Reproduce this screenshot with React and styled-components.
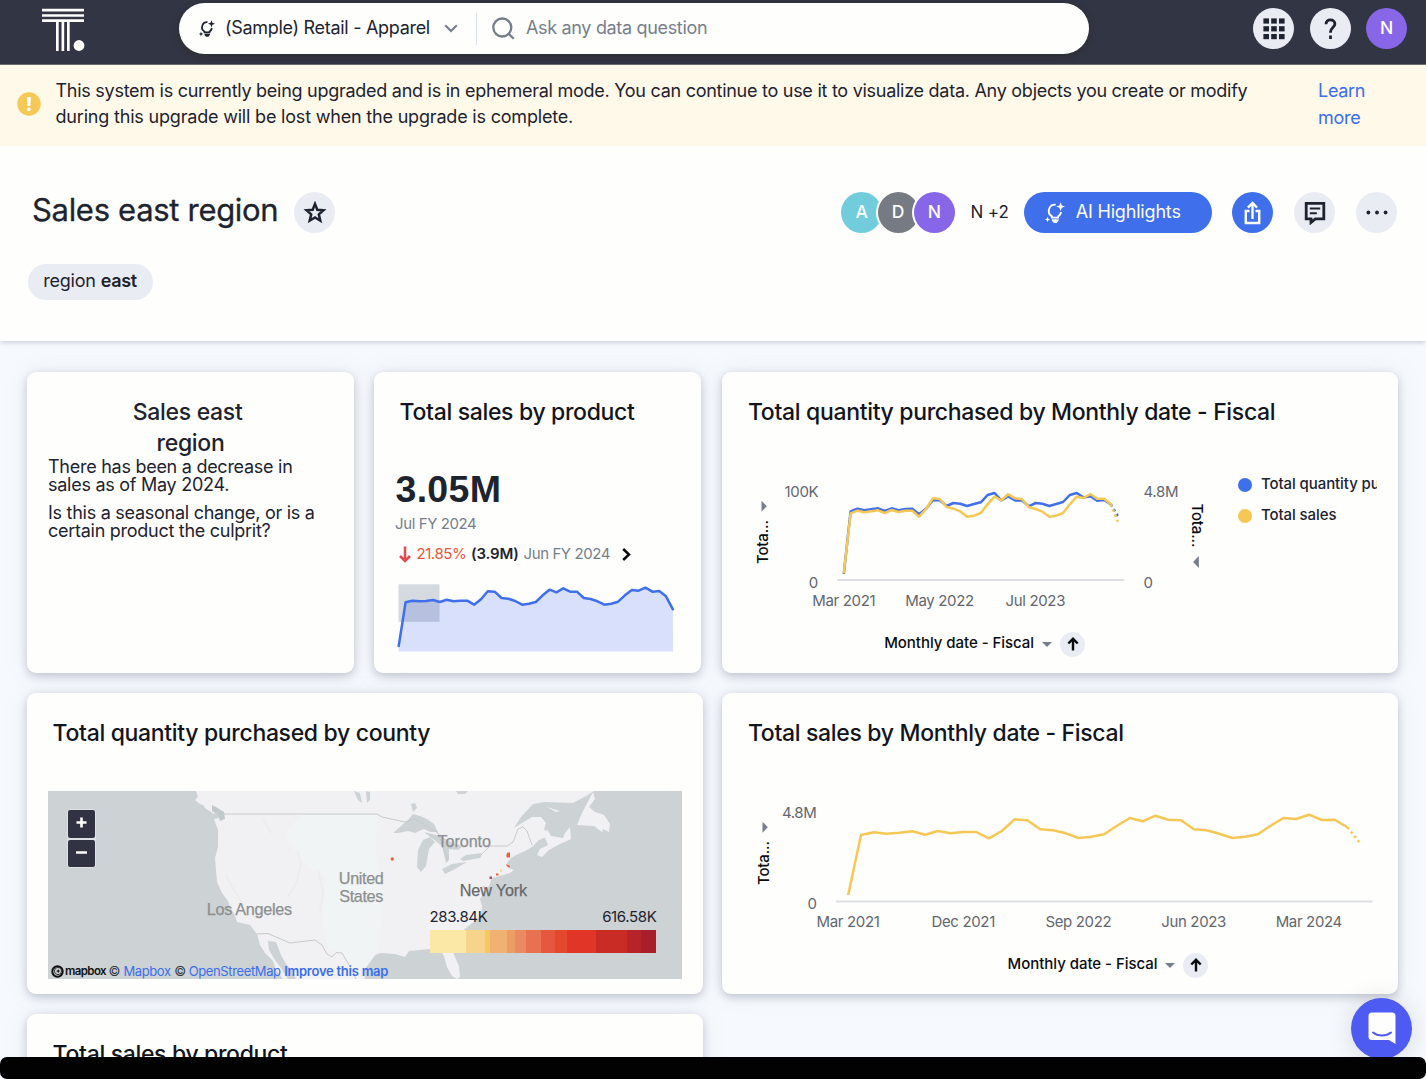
import React from 'react';
import styled, { createGlobalStyle } from 'styled-components';

const GlobalStyle = createGlobalStyle`
  * { box-sizing: border-box; }
  body { margin: 0; background: #f6f9fd; font-family: Inter, "Liberation Sans", sans-serif; color: #1d232f; }
  svg { display: block; flex: none; }
  h1, h2, p { margin: 0; }
  button { font: inherit; border: 0; padding: 0; }
`;

const Page = styled.div`
  height: 1079px;
  display: flex;
  flex-direction: column;
  overflow: hidden;
`;

/* ---------- top bar ---------- */
const TopBar = styled.header`
  height: 65px;
  flex: none;
  display: flex;
  align-items: flex-start;
  padding: 0 19px 0 42px;
  background: #323543;
  border-bottom: 1px solid #6b6c72;
`;
const LogoBox = styled.div`
  width: 137px;
  padding-top: 8px;
`;
const SearchPill = styled.div`
  width: 910px;
  height: 51px;
  margin-top: 3px;
  border-radius: 26px;
  background: #fefefd;
  box-shadow: 0 2px 6px rgba(44, 44, 44, 0.8);
  display: flex;
  align-items: center;
  padding-left: 20px;
  font-size: 18px;
`;
const SourceName = styled.span`
  margin: 0 14px 2px 10px;
  width: 205px;
  white-space: nowrap;
  letter-spacing: -0.3px;
`;
const Divider = styled.span`
  width: 1px;
  height: 32px;
  margin: 0 15px 0 18px;
  background: #dbdfe7;
`;
const Placeholder = styled.span`
  margin: 0 0 2px 11px;
  color: #777e8b;
  letter-spacing: -0.33px;
`;
const TopActions = styled.div`
  display: flex;
  gap: 15.5px;
  margin: 8px 0 0 auto;
`;
const CircleButton = styled.button`
  width: 41px;
  height: 41px;
  flex: none;
  border-radius: 50%;
  display: flex;
  align-items: center;
  justify-content: center;
  background: ${(p) => p.$bg || '#eaecf4'};
  color: ${(p) => p.$color || '#1d232f'};
`;
const Letter = styled.span`
  font-size: 17.5px;
  font-weight: 450;
  line-height: 22px;
  padding-bottom: 2px;
`;

/* ---------- banner ---------- */
const Banner = styled.div`
  height: 81px;
  flex: none;
  display: flex;
  padding: 13px 52px 0 17px;
  background: #fff9e9;
  font-size: 18px;
  line-height: 26px;
`;
const BannerIcon = styled.div`
  padding: 14px 14.5px 0 0;
`;
const BannerText = styled.p`
  width: 1262.5px;
  white-space: nowrap;
`;
const BannerLine = styled.span`
  display: block;
  letter-spacing: ${(p) => p.$spacing}px;
`;
const LearnMore = styled.a`
  width: 56px;
  margin-top: -1px;
  color: #3b6eea;
  line-height: 27px;
  letter-spacing: -0.3px;
`;

/* ---------- board header ---------- */
const BoardHeader = styled.section`
  height: 195px;
  flex: none;
  padding: 46px 29px 0 27.5px;
  background: #fefefd;
  box-shadow: 0 3px 4px -1px rgba(90, 95, 140, 0.25);
  z-index: 1;
`;
const TitleRow = styled.div`
  height: 41px;
  display: flex;
  align-items: center;
`;
const Title = styled.h1`
  margin: 0 15px 0 4.5px;
  padding-bottom: 5px;
  width: 247px;
  white-space: nowrap;
  font-size: 31px;
  line-height: 38px;
  font-weight: 400;
  letter-spacing: -0.31px;
  -webkit-text-stroke: 0.3px #1d232f;
`;
const Actions = styled.div`
  display: flex;
  align-items: center;
  gap: 21px;
  margin-left: auto;
`;
const People = styled.div`
  display: flex;
  align-items: center;
  margin-right: -6px;
`;
const Avatar = styled.span`
  width: 41px;
  height: 41px;
  margin-right: -4.7px;
  border-radius: 50%;
  box-shadow: 0 0 0 2px #fefefd;
  display: flex;
  align-items: center;
  justify-content: center;
  background: ${(p) => p.$bg};
  color: #fefefd;
`;
const MoreCount = styled.span`
  margin-left: 20.2px;
  padding-bottom: 1px;
  font-size: 17px;
  letter-spacing: -0.1px;
`;
const Highlights = styled.button`
  width: 188px;
  height: 41px;
  margin-right: -0.7px;
  border-radius: 21px;
  display: flex;
  align-items: center;
  gap: 11px;
  padding-left: 21px;
  background: #3f6fea;
  color: #fefefd;
  font-size: 18px;
  letter-spacing: -0.18px;
  line-height: 22px;
  & > span { padding-bottom: 2px; }
`;
const FilterChip = styled.div`
  width: 125px;
  height: 36px;
  margin-top: 31px;
  padding: 0 0 3px;
  border-radius: 18px;
  display: flex;
  align-items: center;
  justify-content: center;
  gap: 5px;
  background: #eaecf4;
  font-size: 18px;
  letter-spacing: -0.2px;
  & b { font-weight: 600; letter-spacing: -0.35px; }
`;

/* ---------- board grid ---------- */
const Board = styled.main`
  flex: 1;
  min-height: 0;
  display: flex;
  gap: 19.4px;
  padding: 31px 27px 0;
`;
const Column = styled.div`
  width: 676px;
  flex: none;
  display: flex;
  flex-direction: column;
  gap: 20.5px;
`;
const TileRow = styled.div`
  display: flex;
  gap: 20px;
`;
const Card = styled.article`
  width: ${(p) => p.$w || 676}px;
  height: 300.5px;
  flex: none;
  padding: ${(p) => p.$pt || 25}px 21px 0;
  border-radius: 9px;
  background: #fefefd;
  box-shadow: 0 3px 8px rgba(90, 98, 120, 0.32), 0 0 24px rgba(150, 150, 180, 0.12);
  overflow: hidden;
`;
const CardTitle = styled.h2`
  padding-left: 4.6px;
  height: 31px;
  font-size: 23px;
  line-height: 31px;
  font-weight: 500;
  white-space: nowrap;
  color: #12151d;
  letter-spacing: -0.33px;
`;
const NoteTitle = styled.h2`
  margin-bottom: -1px;
  text-align: center;
  white-space: pre;
  font-size: 23px;
  line-height: 31px;
  font-weight: 500;
  letter-spacing: -0.3px;
`;
const NoteText = styled.p`
  margin-bottom: 9.8px;
  white-space: pre;
  font-size: 18px;
  line-height: 18.2px;
  letter-spacing: -0.27px;
`;

/* ---------- KPI ---------- */
const Kpi = styled.div`
  padding-top: 39px;
  font-size: 15px;
  line-height: 20px;
`;
const KpiValue = styled.div`
  padding-left: 0.5px;
  font: bold 37.5px/44px "Liberation Sans", sans-serif;
  letter-spacing: 0.3px;
`;
const Muted = styled.span`
  color: #777e8b;
  letter-spacing: -0.4px;
`;
const KpiPeriod = styled.div`
  height: 20px;
  margin-top: 3px;
`;
const KpiChange = styled.div`
  height: 20px;
  margin: 10px 0 19px;
  padding-left: 4px;
  display: flex;
  align-items: center;
  white-space: nowrap;
`;
const Delta = styled.span`
  width: 60px;
  padding-left: 5.5px;
  color: #e6563c;
  letter-spacing: -0.45px;
`;
const Previous = styled.b`
  width: 52.5px;
  font-weight: 600;
  letter-spacing: -0.15px;
`;
const Next = styled.span`
  padding-left: 11.5px;
`;

/* ---------- charts ---------- */
const ChartBody = styled.div`
  display: flex;
  height: 148px;
  margin-top: 42px;
`;
const Legend = styled.ul`
  width: 140px;
  height: 66px;
  margin: 2px 0 0 20.5px;
  padding: 0;
  list-style: none;
  overflow: hidden;
`;
const LegendItem = styled.li`
  height: 31px;
  display: flex;
  align-items: flex-start;
  gap: 9px;
  padding-top: 2px;
  white-space: nowrap;
  font-size: 15px;
  line-height: 20px;
  font-weight: 500;
  letter-spacing: -0.08px;
  &::before {
    content: '';
    width: 14px;
    height: 14px;
    flex: none;
    margin-top: 3.5px;
    border-radius: 50%;
    background: ${(p) => p.$color};
  }
`;
const AxisField = styled.div`
  display: flex;
  align-items: center;
  height: 26px;
  margin: 13px 0 0 ${(p) => p.$left}px;
  color: #0b0c10;
  font-size: 15px;
  font-weight: 500;
  letter-spacing: -0.04px;
  line-height: 20px;
  & > span { padding-bottom: 3px; white-space: nowrap; }
`;
const Caret = styled.i`
  margin: 1px 8px 0;
  border: 5.5px solid transparent;
  border-top: 5.5px solid #777e8b;
  border-bottom: 0;
`;
const SortButton = styled.button`
  width: 25px;
  height: 25px;
  border-radius: 50%;
  background: #eaecf4;
  display: flex;
  align-items: center;
  justify-content: center;
`;

/* ---------- map ---------- */
const MapFrame = styled.div`
  position: relative;
  width: 634px;
  height: 188px;
  margin-top: 42px;
`;
const ZoomControls = styled.div`
  position: absolute;
  left: 19px;
  top: 18px;
  padding: 1px;
  display: grid;
  gap: 2px;
  border-radius: 4px;
  background: #dfe2e4;
`;
const ZoomButton = styled.button`
  width: 27px;
  height: 27.5px;
  padding-bottom: 2px;
  border-radius: 2px;
  background: #313343;
  display: flex;
  align-items: center;
  justify-content: center;
`;
const ColorScale = styled.div`
  position: absolute;
  left: 382px;
  top: 116px;
  width: 226.5px;
`;
const ScaleLabels = styled.div`
  display: flex;
  justify-content: space-between;
  height: 23px;
  font-size: 15px;
  line-height: 20px;
  letter-spacing: -0.35px;
  & > span { margin: 0 0 0 -0.5px; }
`;
const ScaleBar = styled.div`
  display: flex;
  height: 23px;
`;
const Swatch = styled.span`
  flex: ${(p) => p.$size};
  background: ${(p) => p.$color};
`;
const Attribution = styled.div`
  position: absolute;
  left: 2.5px;
  bottom: 0;
  height: 15px;
  display: flex;
  align-items: center;
  white-space: nowrap;
  font-size: 13px;
  line-height: 15px;
  letter-spacing: -0.4px;
  color: #33363d;
  & a { color: #3b6eea; margin: 0 3.5px; }
  & a:last-of-type { letter-spacing: -0.37px; margin: 0 3.5px 0 3px; }
  & strong { color: #3b6eea; font-weight: 600; letter-spacing: -0.25px; }
`;
const MapboxName = styled.b`
  width: 45px;
  padding: 0 0 1px 1.5px;
  font-size: 11.5px;
  font-weight: 600;
  color: #111;
  letter-spacing: -0.6px;
`;

/* ---------- overlays ---------- */
const ChatButton = styled.button`
  position: fixed;
  left: 1351px;
  top: 998px;
  width: 61px;
  height: 61px;
  border-radius: 50%;
  background: #4e5bf2;
  box-shadow: 0 2px 26px rgba(0, 0, 0, 0.14);
  display: flex;
  align-items: center;
  justify-content: center;
  z-index: 2;
`;
const BottomBar = styled.footer`
  height: 22px;
  flex: none;
  border-radius: 7px;
  background: #020203;
  z-index: 3;
`;

/* ---------- icons ---------- */
const Logo = () => (
  <svg width="43" height="44" viewBox="0 0 43 44" fill="#fefefd">
    <path d="M0 .8h42v2.6H0zM0 6.2h42v2.6H0zM0 11.3h42v2.7H0zM14 14h2.7v29H14zM19.500 14h2.700v29h-2.700zM25 14h2.700v29H25z" />
    <circle cx="37" cy="37.5" r="5.4" />
  </svg>
);
const BulbIcon = ({ size = 20, weight = 1.9 }) => (
  <svg width={size} height={size * 1.05} viewBox="0 0 20 21" fill="none" stroke="currentColor" strokeWidth={weight}>
    <path d="M10.6 2.7A6.3 6.3 0 0 0 6.9 14.4V15.6H13.2V14.4A6.4 6.4 0 0 0 16.1 10" />
    <path d="M6.8 17.2h6.8v1.6l-2 2.2H8.8l-2-2.2z" fill="currentColor" stroke="none" />
    <path d="M15.6.2 16.8 3.4 20 4.6 16.8 5.8 15.6 9 14.4 5.8 11.2 4.6 14.4 3.4zM2.5 14.8l.8 1.9 1.9.8-1.9.8-.8 1.9-.8-1.9-1.9-.8 1.9-.8z" fill="currentColor" stroke="none" />
  </svg>
);
const ChevronIcon = () => (
  <svg width="14" height="9" viewBox="0 0 14 9" fill="none" stroke="#777e8b" strokeWidth="2.1"><path d="M1.2 1.2 7 7l5.8-5.8" /></svg>
);
const SearchIcon = () => (
  <svg width="23" height="23" viewBox="0 0 23 23" fill="none" stroke="#777e8b" strokeWidth="2.3"><circle cx="10.3" cy="10.5" r="9" /><path d="m16.7 16.8 5 5" /></svg>
);
const GridIcon = () => (
  <svg width="22" height="22" viewBox="0 0 22 22" fill="#1d232f">
    {[0.4, 8.2, 16].map((y) => [0.4, 8.2, 16].map((x) => <rect key={`${x}-${y}`} x={x} y={y} width="5.6" height="5.2" />))}
  </svg>
);
const HelpIcon = () => (
  <svg width="13" height="22" viewBox="0 0 13 22" fill="none" stroke="#1d232f" strokeWidth="2.8">
    <path d="M2 6.2C2 3.400 3.900 1.900 6.400 1.900s4.500 1.600 4.500 4.100c0 3.400-4.400 3.700-4.400 8v.8M6.500 17.600V21" />
  </svg>
);
const WarningIcon = () => (
  <svg width="24" height="24" viewBox="0 0 24 24"><circle cx="12" cy="12" r="11.7" fill="#f5c955" /><path d="M9.9 5h4l-.5 9h-3z" fill="#fefefd" /><circle cx="11.9" cy="17.4" r="1.8" fill="#fefefd" /></svg>
);
const StarIcon = () => (
  <svg width="24" height="23" viewBox="0 0 24 23" fill="none" stroke="#1d232f" strokeWidth="2.5"><path d="m12 2.9 2.300 5.800 6.200.5-4.700 4.200 1.500 6.300L12 16.400l-5.300 3.300 1.500-6.300-4.700-4.200 6.200-.5z" /></svg>
);
const ShareIcon = () => (
  <svg width="17" height="24" viewBox="0 0 17 24" fill="none" stroke="#fefefd" strokeWidth="2.4"><path d="M5.500 10H1.800v12h13.400V10H11.500M8.500 18V3M3.900 6.600 8.500 2l4.600 4.600" /></svg>
);
const CommentIcon = () => (
  <svg width="22" height="24" viewBox="0 0 22 24" fill="none" stroke="#1d232f" strokeWidth="2.800"><path d="M2.200 2.300h17.600v15.600h-8.500L7 21.500v-3.600H2.200z" /><path d="M5.800 7.500h10.400M5.800 12.300h7" strokeWidth="2" /></svg>
);
const DotsIcon = () => (
  <svg width="22" height="5" viewBox="0 0 22 5" fill="#1d232f"><circle cx="2.400" cy="2.500" r="1.900" /><circle cx="11" cy="2.500" r="1.900" /><circle cx="19.600" cy="2.500" r="1.900" /></svg>
);
const DownArrow = () => (
  <svg width="12" height="17" viewBox="0 0 12 17" fill="none" stroke="#ea4650" strokeWidth="2.500"><path d="M6 .5V15M1 10l5 5 5-5" /></svg>
);
const NextIcon = () => (
  <svg width="9" height="13" viewBox="0 0 9 13" fill="none" stroke="#0b0c10" strokeWidth="2.500"><path d="m1.200 1 5.800 5.500L1.200 12" /></svg>
);
const UpArrow = () => (
  <svg width="12" height="14" viewBox="0 0 12 14" fill="none" stroke="#0b0c10" strokeWidth="2.400"><path d="M6 13.500V2M1.300 6.500 6 1.800l4.700 4.700" /></svg>
);
const PlusMinus = ({ plus }) => (
  <svg width="11" height="11" viewBox="0 0 11 11" stroke="#fefefd" strokeWidth="2.600"><path d={plus ? 'M.5 5.500h10M5.500.5v10' : 'M0 5.500h11'} /></svg>
);
const MapboxMark = () => (
  <svg width="13" height="13" viewBox="0 0 13 13"><circle cx="6.500" cy="6.500" r="5.200" fill="none" stroke="#111" strokeWidth="2" /><circle cx="7" cy="6" r="3.600" fill="#cdd2d4" stroke="#111" strokeWidth=".8" /><path d="m7.200 4 .7 1.400 1.400.7-1.400.7-.7 1.400-.7-1.400-1.400-.7 1.400-.7z" fill="#111" /></svg>
);
const ChatIcon = () => (
  <svg width="28" height="33" viewBox="0 0 28 33"><path d="M4 .5h20a3.500 3.500 0 0 1 3.500 3.500v28L21 28H4A3.500 3.500 0 0 1 .5 24.500V4A3.500 3.500 0 0 1 4 .5z" fill="#fefefd" /><path d="M5 20.500c5 4 13 4 18 0" fill="none" stroke="#4e5bf2" strokeWidth="2" strokeLinecap="round" /></svg>
);

/* ---------- data ---------- */
const SPARK = [62, 18.3, 16.7, 17.3, 17, 16, 18, 15.7, 17.3, 16.7, 16.7, 20.7, 15.3, 7.3, 7.7, 14, 14.7, 17, 20.7, 19.7, 18, 11.3, 5.7, 8.3, 4.3, 7.7, 7.7, 14, 15, 17.3, 20.7, 19.7, 17.7, 11.3, 6, 6.7, 3.7, 7.7, 7, 12.3, 25.3];
const QUANTITY = [104, 41.3, 38.7, 40.3, 39.3, 38.3, 41, 38.3, 40.3, 39, 38.7, 44.3, 38.7, 30.3, 30.3, 36, 33, 33.7, 36, 34, 32.3, 25, 23, 30.3, 26.5, 30.5, 30.3, 36.3, 33, 33.7, 36, 34, 32, 25, 23, 27.5, 26.3, 30.7, 30, 34.5, 46];
const SALES_SMALL = [103.3, 43.3, 40.7, 42.3, 41.3, 40.3, 43, 40, 42, 40.7, 40.7, 46.7, 39, 28.3, 29, 37, 38.7, 41.3, 46.7, 45.7, 43, 34.3, 26.7, 30.3, 24.3, 28.3, 29, 37, 39, 41.7, 46.7, 45.7, 43, 34.3, 26.7, 28, 24, 28.7, 28.7, 34.3, 51.7];
const SALES = [104, 44, 41.3, 42.7, 41.7, 40.3, 43.7, 40, 42.3, 41, 41, 47.3, 40, 28.3, 29.3, 38.3, 39.3, 42.3, 47, 45.7, 43.3, 34.7, 27, 30.3, 24.7, 28.7, 29.3, 38.3, 39.3, 42.7, 47, 45.7, 43.3, 34.7, 27, 28, 23.7, 29, 28.7, 36.3, 52.3];

const toPoints = (data, x0, step) => data.map((y, i) => `${(x0 + i * step).toFixed(1)},${y}`);

const Series = ({ data, x0, step, color }) => {
  const pts = toPoints(data, x0, step);
  return (
    <g fill="none" stroke={color} strokeWidth="2.5" strokeLinejoin="round">
      <polyline points={pts.slice(0, -1).join(' ')} />
      <polyline points={pts.slice(-2).join(' ')} strokeDasharray="2.5 3" />
    </g>
  );
};

const TickText = styled.text`
  font-size: 15px;
  fill: #63666e;
  letter-spacing: -0.35px;
  text-anchor: ${(p) => p.$anchor || 'middle'};
`;
const AxisName = styled.text`
  font-size: 15px;
  font-weight: 500;
  fill: #0b0c10;
`;

const Sparkline = () => (
  <svg width="280" height="70" viewBox="-3 -1 280 70">
    <polygon points={`0.7,67.5 ${toPoints(SPARK, 0.7, 6.855).join(' ')} 275,67.5`} fill="#d9e0fb" />
    <rect x="0.5" y="0.3" width="41" height="37.5" fill="#1d3060" opacity=".18" />
    <polyline points={toPoints(SPARK, 0.7, 6.855).join(' ')} fill="none" stroke="#3f6fea" strokeWidth="2.5" strokeLinecap="round" strokeLinejoin="round" />
  </svg>
);

const QuantityChart = () => (
  <svg width="474" height="148" viewBox="1.2 0 474 148">
    <path d="M19.7 30.7 25 36.2l-5.300 5.500z" fill="#777e8b" />
    <AxisName transform="translate(26.3 94) rotate(-90)" textLength="44">Tota...</AxisName>
    <TickText x="76.5" y="27" $anchor="end">100K</TickText>
    <TickText x="76" y="118" $anchor="end">0</TickText>
    <path d="M95.500 110H382" stroke="#dddfe4" strokeWidth="2" />
    <Series data={QUANTITY} x0={102} step={6.85} color="#3f6fea" />
    <Series data={SALES_SMALL} x0={102} step={6.85} color="#f5c755" />
    <TickText x="102" y="136">Mar 2021</TickText>
    <TickText x="197.7" y="136">May 2022</TickText>
    <TickText x="293.5" y="136">Jul 2023</TickText>
    <TickText x="401.7" y="27" $anchor="start">4.8M</TickText>
    <TickText x="401.7" y="118" $anchor="start">0</TickText>
    <AxisName transform="translate(450.5 33.5) rotate(90)" textLength="44">Tota...</AxisName>
    <path d="M457 86 451.300 92l5.700 6z" fill="#777e8b" />
  </svg>
);

const SalesChart = () => (
  <svg width="634" height="148" viewBox="1.5 0 634 148">
    <path d="M21 30.7 26.300 36.200l-5.300 5.500z" fill="#777e8b" />
    <AxisName transform="translate(27.5 94) rotate(-90)" textLength="44">Tota...</AxisName>
    <TickText x="75" y="27" $anchor="end">4.8M</TickText>
    <TickText x="75" y="118" $anchor="end">0</TickText>
    <path d="M94.500 110.500H631" stroke="#dddfe4" strokeWidth="2" />
    <Series data={SALES} x0={106.7} step={12.8} color="#f5c755" />
    {['Mar 2021', 'Dec 2021', 'Sep 2022', 'Jun 2023', 'Mar 2024'].map((label, i) => (
      <TickText key={label} x={106.5 + i * 115.2} y="136">{label}</TickText>
    ))}
  </svg>
);

const MapLabel = styled.text`
  font-family: "Liberation Sans", sans-serif;
  font-size: 16.2px;
  fill: ${(p) => (p.$strong ? '#66696c' : '#8d8f91')};
  stroke: ${(p) => (p.$strong ? '#66696c' : '#8d8f91')};
  stroke-width: 0.25px;
`;

const LAND = 'M196 791L198 797 195 800 200 804 206 806 212 808 223 817 214 819 218 830 218 847 215 858 217 882 222 893 228 901 230 907 235 916 237 922 250 925 257 934 260 945 265 953 273 961 276 970 283 979H365L364 970 368 965 375 955 381 953 395 954 405 957 409 951 430 949 440 950 444 956 447 967 452 976 457 979 460 977 459 966 454 955 452 946 457 936 467 927 474 922 481 915 482 906 480 899 484 893 489 886 492 878 500 876 510 873 514 870 508 868 507 863 511 858 518 854 525 851 532 847 539 840 546 837 548 833 544 829 546 823 541 817 532 817 522 823 514 828 521 817 533 804 545 802 573 803 586 796 594 791Z';

const CountyMap = () => (
  <svg width="634" height="188" viewBox="48 791 634 188">
    <rect x="48" y="791" width="634" height="188" fill="#cdd2d4" />
    <path d={LAND} fill="#f1f1f3" />
    <path d="M300 815H377L376 850 384 900 378 952 366 966 353 970 342 953 328 948 322 922 326 880 300 860 285 835z" fill="#f1f4f4" />
    <g fill="#f1f1f3">
      <path d="M593 792L595 799 589 807 595 812 604 815 610 824 609 832 603 829 602 832 594 826 577 825 582 813z" />
      <path d="M547 829L551 836 563 838 565 833 570 827 571 839 558 845 549 850 542 857 537 855 540 849 548 845 545 838z" />
      <path d="M547 807L560 811 556 812z" />
      <path d="M200 799L217 811 214 814 205 808z" />
    </g>
    <path d="M212 805l4 2 8 5 1 7-5 2-2-6-6-4z" fill="#c2c9cb" />
    <g fill="#cdd2d4">
      <path d="M268 941L276 942 281 955 286 964 293 972 296 979H288L281 968 275 960 269 950z" />
      <path d="M393 833L401 826 408 820 413 814 420 816 427 819 434 824 438 832 430 832 424 829 415 833 408 831 398 833z" />
      <path d="M423 840L430 837 435 842 429 849 426 866 421 872 417 867 418 850z" />
      <path d="M424 832L440 836 453 843 463 846 458 850 449 849 449 860 446 863 442 846 433 839z" />
      <path d="M442 869L452 864 467 862 455 869 445 874z" />
      <path d="M460 859L466 855 483 853 480 858 463 861z" />
      <path d="M411 804l4-1 2 5-4 4zM354 791l6 2 2 10-4-3zM366 791l4 1v8l-3 3zM456 791l12 0-3 3-7 0z" />
    </g>
    <g fill="none" stroke="#c8cacc" strokeWidth="1">
      <path d="M224 814H377L382 817 405 822 415 819 438 833 448 860M483 853L490 846H507L513 842 518 829 523 827 527 831 532 845" />
      <path d="M257 934L268 933.5 290 943 315 940 322 945 327 954 332 957 336 952.5 342 953 352 970 356 979" />
    </g>
    <g fill="none" stroke="#ece9e6" strokeWidth="2" opacity=".6">
      <path d="M226 875l7 14 9 13M297 850l4 12-4 20-9 15M318 870l5 22-3 20M263 818l8 15" />
    </g>
    <g fill="#e4643f">
      <circle cx="392.3" cy="859" r="1.7" />
      <path d="M507.5 852.5h2.5v5h-3.500v-3zM506 864l4 2v1.500l-3-1zM496 873.500h2.500v2H496zM483.500 886l2.500 3h-2z" />
    </g>
    <rect x="489.5" y="876.5" width="2.5" height="2.5" fill="#a0506a" />
    <rect x="500" y="869" width="2" height="3" fill="#f6dfa0" />
    <MapLabel x="437.5" y="847.3" textLength="53.5">Toronto</MapLabel>
    <MapLabel x="338.8" y="884" textLength="45">United</MapLabel>
    <MapLabel x="339.3" y="902" textLength="44">States</MapLabel>
    <MapLabel x="206.7" y="914.8" textLength="85.5">Los Angeles</MapLabel>
    <MapLabel x="459.7" y="895.8" textLength="67.5" $strong>New York</MapLabel>
  </svg>
);

const SCALE = [[108, '#fce8a6'], [57, '#f6d48c'], [14, '#f3c85c'], [52, '#efb272'], [24, '#ec9d61'], [33, '#e98a63'], [45, '#e87152'], [42, '#e6573f'], [36, '#e4482f'], [87, '#e13527'], [93, '#c92b25'], [42, '#b82329'], [47, '#a81f2b']];

const FieldPicker = ({ left }) => (
  <AxisField $left={left}>
    <span>Monthly date - Fiscal</span>
    <Caret />
    <SortButton><UpArrow /></SortButton>
  </AxisField>
);

export default function App() {
  return (
    <Page>
      <GlobalStyle />
      <TopBar>
        <LogoBox><Logo /></LogoBox>
        <SearchPill>
          <BulbIcon size={16} weight={2.2} />
          <SourceName>(Sample) Retail - Apparel</SourceName>
          <ChevronIcon />
          <Divider />
          <SearchIcon />
          <Placeholder>Ask any data question</Placeholder>
        </SearchPill>
        <TopActions>
          <CircleButton><GridIcon /></CircleButton>
          <CircleButton><HelpIcon /></CircleButton>
          <CircleButton $bg="#8866e8" $color="#fefefd"><Letter>N</Letter></CircleButton>
        </TopActions>
      </TopBar>

      <Banner>
        <BannerIcon><WarningIcon /></BannerIcon>
        <BannerText>
          <BannerLine $spacing={-0.27}>This system is currently being upgraded and is in ephemeral mode. You can continue to use it to visualize data. Any objects you create or modify</BannerLine>
          <BannerLine $spacing={-0.19}>during this upgrade will be lost when the upgrade is complete.</BannerLine>
        </BannerText>
        <LearnMore>Learn more</LearnMore>
      </Banner>

      <BoardHeader>
        <TitleRow>
          <Title>Sales east region</Title>
          <CircleButton><StarIcon /></CircleButton>
          <Actions>
            <People>
              <Avatar $bg="#71cddc"><Letter>A</Letter></Avatar>
              <Avatar $bg="#767b83"><Letter>D</Letter></Avatar>
              <Avatar $bg="#8866e8"><Letter>N</Letter></Avatar>
              <MoreCount>N +2</MoreCount>
            </People>
            <Highlights><BulbIcon /><span>AI Highlights</span></Highlights>
            <CircleButton $bg="#3f6fea"><ShareIcon /></CircleButton>
            <CircleButton><CommentIcon /></CircleButton>
            <CircleButton><DotsIcon /></CircleButton>
          </Actions>
        </TitleRow>
        <FilterChip><span>region</span><b>east</b></FilterChip>
      </BoardHeader>

      <Board>
        <Column>
          <TileRow>
            <Card $w={327}>
              <NoteTitle>{'Sales east \nregion'}</NoteTitle>
              <NoteText>{'There has been a decrease in\nsales as of May 2024.'}</NoteText>
              <NoteText>{'Is this a seasonal change, or is a\ncertain product the culprit?'}</NoteText>
            </Card>
            <Card $w={327}>
              <CardTitle>Total sales by product</CardTitle>
              <Kpi>
                <KpiValue>3.05M</KpiValue>
                <KpiPeriod><Muted>Jul FY 2024</Muted></KpiPeriod>
                <KpiChange>
                  <DownArrow />
                  <Delta>21.85%</Delta>
                  <Previous>(3.9M)</Previous>
                  <Muted>Jun FY 2024</Muted>
                  <Next><NextIcon /></Next>
                </KpiChange>
                <Sparkline />
              </Kpi>
            </Card>
          </TileRow>
          <Card>
            <CardTitle>Total quantity purchased by county</CardTitle>
            <MapFrame>
              <CountyMap />
              <ZoomControls>
                <ZoomButton><PlusMinus plus /></ZoomButton>
                <ZoomButton><PlusMinus /></ZoomButton>
              </ZoomControls>
              <ColorScale>
                <ScaleLabels><span>283.84K</span><span>616.58K</span></ScaleLabels>
                <ScaleBar>{SCALE.map(([size, color]) => <Swatch key={color} $size={size} $color={color} />)}</ScaleBar>
              </ColorScale>
              <Attribution>
                <MapboxMark />
                <MapboxName>mapbox</MapboxName>
                ©<a>Mapbox</a>©<a>OpenStreetMap</a><strong>Improve this map</strong>
              </Attribution>
            </MapFrame>
          </Card>
          <Card $pt={24.5}><CardTitle>Total sales by product</CardTitle></Card>
        </Column>
        <Column>
          <Card>
            <CardTitle>Total quantity purchased by Monthly date - Fiscal</CardTitle>
            <ChartBody>
              <QuantityChart />
              <Legend>
                <LegendItem $color="#3f6fea">Total quantity purchased</LegendItem>
                <LegendItem $color="#f5c755">Total sales</LegendItem>
              </Legend>
            </ChartBody>
            <FieldPicker left={140.8} />
          </Card>
          <Card>
            <CardTitle>Total sales by Monthly date - Fiscal</CardTitle>
            <ChartBody><SalesChart /></ChartBody>
            <FieldPicker left={264.2} />
          </Card>
        </Column>
      </Board>

      <ChatButton><ChatIcon /></ChatButton>
      <BottomBar />
    </Page>
  );
}
